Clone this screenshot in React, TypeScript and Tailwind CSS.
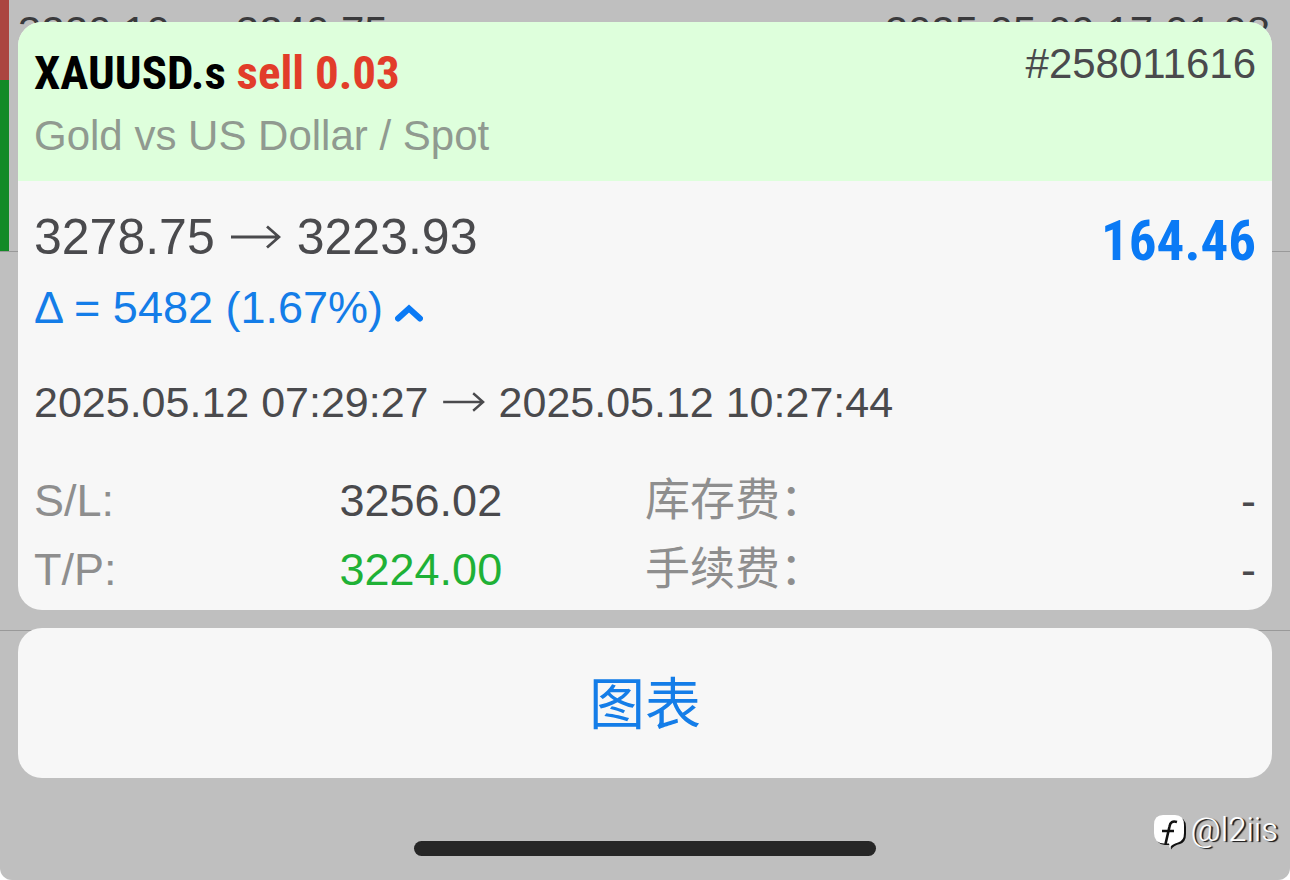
import { useState } from 'react';
import clsx from 'clsx';

const trade = {
  symbol: 'XAUUSD.s',
  side: 'sell 0.03',
  ticket: '#258011616',
  description: 'Gold vs US Dollar / Spot',
  openPrice: '3278.75',
  closePrice: '3223.93',
  profit: '164.46',
  delta: 'Δ = 5482 (1.67%)',
  openTime: '2025.05.12 07:29:27',
  closeTime: '2025.05.12 10:27:44',
};

const details = [
  { label: 'S/L:', value: '3256.02', feeLabel: '库存费：', fee: '-' },
  { label: 'T/P:', value: '3224.00', feeLabel: '手续费：', fee: '-', hit: true },
];

function Arrow({ className }: { className: string }) {
  return (
    <svg viewBox="0 0 50 24" fill="none" stroke="currentColor" strokeWidth="2.8" className={className}>
      <path d="M0 12H48M36 1.5L48 12L36 22.5" />
    </svg>
  );
}

// previous history rows, dimmed behind the sheet
function HistoryBackdrop() {
  return (
    <div aria-hidden="true" className="absolute inset-0 overflow-hidden rounded-b-xl bg-[#bfbfbf] text-[#3a3a3c]">
      <div className="flex h-[252px] border-b border-[#999999]">
        <div className="flex w-[9px] flex-col">
          <div className="h-20 bg-[#ab4540]" />
          <div className="flex-1 bg-[#128a26]" />
        </div>
        <div className="flex flex-1 items-start justify-between pt-2 pr-5 pl-[9px] text-[42px] leading-[48px]">
          <span className="flex items-center gap-3">
            3220.10
            <Arrow className="h-5 w-[42px]" />
            3240.75
          </span>
          <span>2025.05.09 17:01:08</span>
        </div>
      </div>
      <div className="h-[379px] border-b border-[#999999]" />
    </div>
  );
}

function Watermark() {
  return (
    <div className="absolute right-3 bottom-[30px] flex items-end gap-1 text-white">
      <svg viewBox="0 0 34 36" className="h-9 w-[34px]">
        <path
          d="M12 3H23Q33 3 33 13V20Q33 28 27 30Q21 31 18 35.500Q18.500 32 17.500 31H12Q3 31 3 20V13Q3 3 12 3Z"
          fill="#111"
        />
        <path d="M10 1H22Q31 1 31 11V19Q31 27 25 28.500Q19 30 16 34Q17 31 16 29.500H11Q1 29 1 19V11Q1 1 10 1Z" fill="#fff" />
        <path d="M24 8Q17.500 6 16.500 12.500L12.500 30M9 17H21" fill="none" stroke="#111" strokeWidth="2.600" />
      </svg>
      <span className="font-['Roboto',sans-serif] text-[33px] leading-10 font-light [text-shadow:2px_1px_1px_#111]">
        @l2iis
      </span>
    </div>
  );
}

export default function App() {
  const [expanded, setExpanded] = useState(true);

  return (
    <div className="relative min-h-screen bg-white font-['Liberation_Sans','Noto_Sans_CJK_SC',sans-serif]">
      <HistoryBackdrop />

      <main className="relative flex min-h-screen flex-col px-[18px] pt-[22px] pb-6">
        <section className="overflow-hidden rounded-3xl bg-[#f7f7f7] text-[45px] leading-[53px] text-[#4a4a4d]">
          <header className="flex h-[159px] items-start justify-between bg-[#deffdc] px-4 pt-[15px] text-[42px]">
            <div>
              <h1 className="font-['Roboto_Condensed','Roboto',sans-serif] text-[47px] leading-[72px] font-bold text-black">
                {trade.symbol} <span className="text-[#e23d2a]">{trade.side}</span>
              </h1>
              <p className="text-[#909a90]">{trade.description}</p>
            </div>
            <span>{trade.ticket}</span>
          </header>

          <div className="px-4 pt-6 pb-3.5">
            <div className="flex items-center justify-between">
              <p className="flex items-center gap-4 text-[50px] leading-[64px]">
                {trade.openPrice}
                <Arrow className="h-6 w-[50px]" />
                {trade.closePrice}
              </p>
              <span className="pt-2 font-['Roboto_Condensed','Roboto',sans-serif] text-[55px] leading-[56px] font-bold text-[#0a7af5]">
                {trade.profit}
              </span>
            </div>

            <button
              type="button"
              aria-expanded={expanded}
              onClick={() => setExpanded(!expanded)}
              className="mt-3 flex items-center gap-3 text-[#147de8]"
            >
              {trade.delta}
              <svg
                viewBox="0 0 28 20"
                fill="none"
                stroke="#0a7af5"
                strokeWidth="6"
                className={clsx('mt-3 h-5 w-7', !expanded && 'rotate-180')}
              >
                <path d="M3 14.500L14 4.500L25 14.500" strokeLinecap="round" />
              </svg>
            </button>

            {expanded && (
              <>
                <p className="mt-[42px] flex items-center gap-3.5 text-[43px] leading-[52px]">
                  {trade.openTime}
                  <Arrow className="h-5 w-[42px]" />
                  {trade.closeTime}
                </p>
                <dl className="mt-[46px] flex flex-col gap-4">
                  {details.map((row) => (
                    <div key={row.label} className="grid grid-cols-4">
                      <dt className="text-[#8e8e8e]">{row.label}</dt>
                      <dd className={clsx(row.hit && 'text-[#1fb136]')}>{row.value}</dd>
                      <dt className="text-[#8e8e8e]">{row.feeLabel}</dt>
                      <dd className="text-right">{row.fee}</dd>
                    </div>
                  ))}
                </dl>
              </>
            )}
          </div>
        </section>

        <button
          type="button"
          className="mt-[18px] h-[150px] rounded-3xl bg-[#f7f7f7] pt-1 text-[56px] leading-[64px] text-[#147de8]"
        >
          图表
        </button>

        <div className="mx-auto mt-auto h-[15px] w-[462px] rounded-full bg-[#262626]" />
      </main>

      <Watermark />
    </div>
  );
}
